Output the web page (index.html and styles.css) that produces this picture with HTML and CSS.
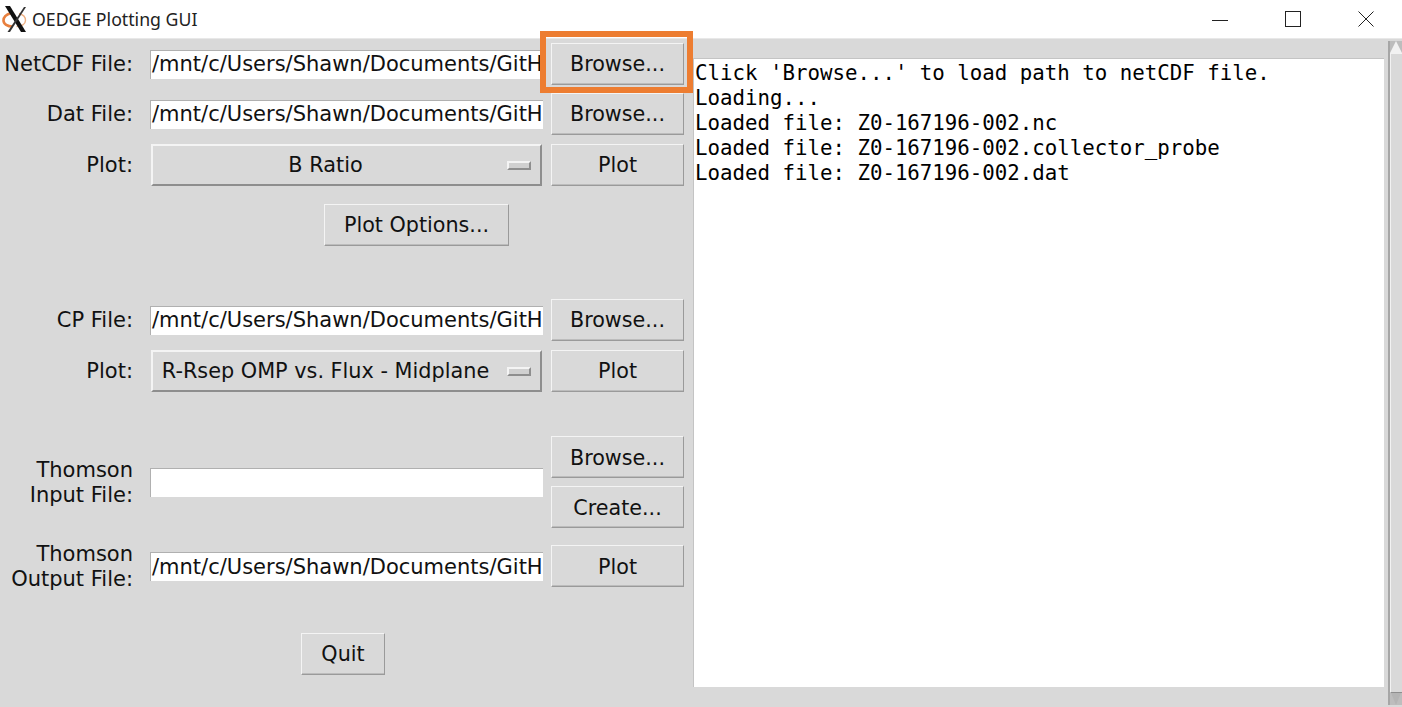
FILE: index.html
```html
<!DOCTYPE html>
<html lang="en">
<head>
    <meta charset="UTF-8">
    <title>OEDGE Plotting GUI</title>
    <link rel="stylesheet" href="styles.css">
</head>
<body>
    <div class="titlebar">
        <svg class="app-icon" width="26" height="30" viewBox="0 0 26 30">
            <path d="M9 9C4 10.500 1.500 13.500 1.500 16.500c0 3.500 4 6 9 6" fill="none" stroke="#e8803f" stroke-width="2.6"/>
            <path d="M17 9.500c4 1 6.500 3.500 6.500 7 0 3.500-4 6-9 6" fill="none" stroke="#eeb083" stroke-width="1.400"/>
            <path d="M3 2h5l16 26h-5z" fill="#111"/>
            <path d="M22 3h2L8 28H5.500z" fill="#333"/>
        </svg>
        <span class="title">OEDGE Plotting GUI</span>
        <div class="win-controls">
            <svg width="16" height="16" viewBox="0 0 16 16"><path d="M0 9.500h16" stroke="#222" stroke-width="1"/></svg>
            <svg width="16" height="16" viewBox="0 0 16 16"><rect x=".5" y=".5" width="15" height="15" fill="none" stroke="#222"/></svg>
            <svg width="16" height="16" viewBox="0 0 16 16"><path d="M.5.5l15 15M15.500.5l-15 15" stroke="#222" stroke-width="1"/></svg>
        </div>
    </div>

    <div class="main">
        <div class="form">
            <div class="row">
                <label class="field-label">NetCDF File:</label>
                <div class="entry">/mnt/c/Users/Shawn/Documents/GitH</div>
                <button class="btn">Browse...</button>
            </div>
            <div class="row">
                <label class="field-label">Dat File:</label>
                <div class="entry">/mnt/c/Users/Shawn/Documents/GitH</div>
                <button class="btn">Browse...</button>
            </div>
            <div class="row row-tight">
                <label class="field-label">Plot:</label>
                <div class="menu"><span class="menu-text">B Ratio</span><span class="menu-ind"></span></div>
                <button class="btn">Plot</button>
            </div>
            <div class="row row-options">
                <button class="btn btn-options">Plot Options...</button>
            </div>

            <div class="row row-cp">
                <label class="field-label">CP File:</label>
                <div class="entry">/mnt/c/Users/Shawn/Documents/GitH</div>
                <button class="btn">Browse...</button>
            </div>
            <div class="row row-tight">
                <label class="field-label">Plot:</label>
                <div class="menu"><span class="menu-text">R-Rsep OMP vs. Flux - Midplane</span><span class="menu-ind"></span></div>
                <button class="btn">Plot</button>
            </div>

            <div class="row row-thomson">
                <label class="field-label">Thomson<br>Input File:</label>
                <div class="entry"></div>
                <div class="btn-stack">
                    <button class="btn">Browse...</button>
                    <button class="btn">Create...</button>
                </div>
            </div>
            <div class="row row-output">
                <label class="field-label">Thomson<br>Output File:</label>
                <div class="entry">/mnt/c/Users/Shawn/Documents/GitH</div>
                <button class="btn">Plot</button>
            </div>
            <div class="row row-quit">
                <button class="btn btn-quit">Quit</button>
            </div>
        </div>

        <div class="log">Click 'Browse...' to load path to netCDF file.
Loading...
Loaded file: Z0-167196-002.nc
Loaded file: Z0-167196-002.collector_probe
Loaded file: Z0-167196-002.dat</div>

        <div class="scrollbar">
            <svg class="arrow" width="12" height="12" viewBox="0 0 12 12"><path d="M0 12L6 0l6 12z" fill="#f2f2f2"/></svg>
            <div class="thumb"></div>
            <svg class="arrow" width="12" height="12" viewBox="0 0 12 12"><path d="M1 0l5 12 5-12z" fill="#b4b4b4"/></svg>
        </div>
    </div>

    <div class="highlight"></div>
</body>
</html>
```

FILE: styles.css
```css
html, body {
    margin: 0;
    height: 100%;
    overflow: hidden;
}
body {
    font-family: 'DejaVu Sans', sans-serif;
    font-size: 21px;
    color: #111;
    background-color: #d9d9d9;
    display: flex;
    flex-direction: column;
}
.titlebar {
    height: 38px;
    background-color: white;
    display: flex;
    align-items: center;
    flex-shrink: 0;
}
.app-icon {
    margin-left: 2px;
}
.title {
    font-family: 'Noto Sans', sans-serif;
    font-size: 17.7px;
    margin-left: 4px;
    color: #222;
}
.win-controls {
    margin-left: auto;
    width: 162px;
    display: flex;
    justify-content: space-between;
    margin-right: 28px;
}
.main {
    flex: 1;
    display: flex;
    border-top: 1px solid #e8e8e8;
    position: relative;
}
.form {
    width: 693px;
    flex-shrink: 0;
    padding-top: 4px;
    box-sizing: border-box;
}
.row {
    display: flex;
    align-items: center;
    height: 42px;
    margin-bottom: 8px;
}
.row-tight {
    margin-top: 9px;
    margin-bottom: 0;
}
.row-options {
    margin-top: 18px;
    padding-left: 324px;
}
.row-cp {
    margin-top: 53px;
    margin-bottom: 0;
}
.row-cp + .row-tight {
    margin-top: 9px;
}
.row-thomson {
    margin-top: 44px;
    height: 92px;
    margin-bottom: 17px;
}
.row-output {
    margin-bottom: 0;
}
.row-quit {
    margin-top: 46px;
    padding-left: 301px;
}
.field-label {
    width: 133px;
    text-align: right;
    flex-shrink: 0;
    line-height: 25px;
}
.row-thomson .field-label, .row-output .field-label {
    padding-top: 2px;
}
.row-thomson .btn, .row-output .btn {
    padding-top: 2px;
}
.entry {
    width: 393px;
    height: 29px;
    margin-left: 17px;
    box-sizing: border-box;
    background-color: white;
    border-top: 1px solid #b0b0b0;
    border-left: 1px solid #b0b0b0;
    padding-left: 1px;
    line-height: 27px;
    white-space: nowrap;
    overflow: hidden;
    flex-shrink: 0;
}
.row-output .entry {
    line-height: 29px;
}
.btn {
    width: 133px;
    height: 42px;
    margin-left: 8px;
    padding: 0;
    font-family: inherit;
    font-size: 20.7px;
    color: inherit;
    background-color: #d9d9d9;
    box-sizing: border-box;
    border: 1px solid;
    border-color: #f4f4f4 #9a9a9a #9a9a9a #f4f4f4;
    box-shadow: inset 0 -1px 0 #bcbcbc;
    flex-shrink: 0;
}
.btn-options {
    width: 185px;
    margin-left: 0;
}
.btn-quit {
    width: 84px;
    margin-left: 0;
}
.btn-stack {
    display: flex;
    flex-direction: column;
    gap: 8px;
}
.menu {
    width: 391px;
    height: 42px;
    margin-left: 18px;
    margin-right: 1px;
    box-sizing: border-box;
    border: 2px solid;
    border-color: #f4f4f4 #8e8e8e #8e8e8e #f4f4f4;
    display: flex;
    align-items: center;
    position: relative;
    font-size: 20.8px;
    flex-shrink: 0;
}
.menu-text {
    width: 345px;
    text-align: center;
}
.menu-ind {
    position: absolute;
    right: 9px;
    top: 15px;
    width: 24px;
    height: 9px;
    box-sizing: border-box;
    background-color: #d0d0d0;
    border: 2px solid;
    border-color: #f4f4f4 #8e8e8e #8e8e8e #f4f4f4;
}
.log {
    width: 691px;
    height: 629px;
    margin-top: 19px;
    box-sizing: border-box;
    background-color: white;
    border-top: 1px solid #c4c4c4;
    border-left: 1px solid #c4c4c4;
    padding: 2px 0 0 1px;
    font-family: 'DejaVu Sans Mono', monospace;
    font-size: 20.75px;
    line-height: 25px;
    white-space: pre;
    color: #000;
    flex-shrink: 0;
}
.scrollbar {
    width: 14px;
    margin-left: 4px;
    margin-top: 2px;
    height: 664px;
    box-sizing: border-box;
    display: flex;
    flex-direction: column;
    flex-shrink: 0;
    border-left: 2px solid #a6a6a6;
}
.thumb {
    flex: 1;
    background-color: #d9d9d9;
    border-top: 1px solid #f2f2f2;
    border-bottom: 1px solid #8e8e8e;
    border-left: 1px solid #f2f2f2;
}
.arrow {
    display: block;
    background-color: #bdbdbd;
    flex-shrink: 0;
}
.highlight {
    position: absolute;
    left: 540px;
    top: 31px;
    width: 153px;
    height: 62px;
    box-sizing: border-box;
    border: 6px solid #ed7d31;
}
```
